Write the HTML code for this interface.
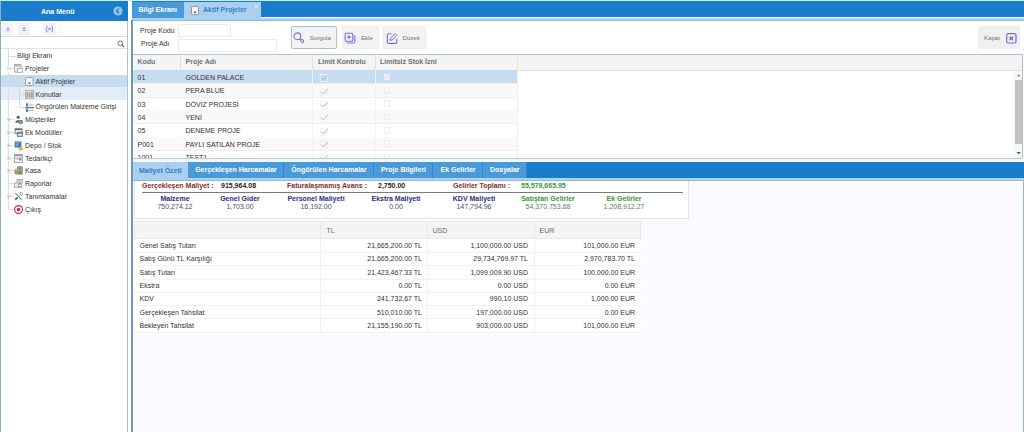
<!DOCTYPE html>
<html><head><meta charset="utf-8">
<style>
*{box-sizing:border-box;margin:0;padding:0}
html,body{width:1024px;height:432px;overflow:hidden;background:#fff;font-family:"Liberation Sans",sans-serif;font-size:7px;color:#333}
.a{position:absolute}
.t{position:absolute;white-space:pre;line-height:8px}
.b{font-weight:bold}
svg{position:absolute;overflow:visible}
</style></head><body>

<div class="a" style="left:0px;top:0px;width:1024px;height:1.2px;background:#c8eef8;"></div>
<div class="a" style="left:0px;top:1px;width:1px;height:431px;background:#8eb0bf;"></div>
<div class="a" style="left:127.1px;top:1px;width:1.2px;height:431px;background:#aac6d0;"></div>
<div class="a" style="left:1px;top:1.2px;width:126.6px;height:19.8px;background:#1a7ccb;"></div>
<div class="t b" style="left:41px;top:7.5px;color:#fff;font-size:7px;">Ana Menü</div>
<svg style="left:113px;top:6px" width="10" height="10"><circle cx="5" cy="5" r="4.6" fill="#8ec4ef"/><path d="M5.8 2.8 L3.6 5 L5.8 7.2" stroke="#1a7ccb" stroke-width="1.3" fill="none"/></svg>
<div class="a" style="left:1px;top:21px;width:126px;height:15px;background:#fff;"></div>
<div class="a" style="left:2px;top:23px;width:11px;height:12px;background:#f3f3f3;"></div>
<div class="a" style="left:18px;top:23px;width:12px;height:12px;background:#f3f3f3;"></div>
<div class="a" style="left:43px;top:23px;width:13px;height:12px;background:#f3f3f3;"></div>
<div class="a" style="left:60px;top:23px;width:1px;height:12px;background:#f4f4f4;"></div>
<svg style="left:5px;top:26px" width="6" height="6"><path d="M1.6 2.3h2.8M1.6 4.3h2.8" stroke="#7b6fd8" stroke-width="0.9"/></svg>
<svg style="left:21px;top:26px" width="6" height="6"><path d="M1.8 2.4h2.8M1.8 4.5h2.8" stroke="#7b6fd8" stroke-width="0.9"/><circle cx="3.2" cy="0.9" r="0.5" fill="#9a90e0"/></svg>
<svg style="left:45px;top:25px" width="9" height="8"><path d="M2 0.8Q0.6 4 2 7.2M7 0.8Q8.4 4 7 7.2" stroke="#7b6fd8" stroke-width="0.8" fill="none"/><path d="M3.3 2.8L5.7 5.2M5.7 2.8L3.3 5.2" stroke="#7b6fd8" stroke-width="0.9"/></svg>
<div class="a" style="left:1px;top:36px;width:126px;height:0.9px;background:#d8d8d8;"></div>
<svg style="left:117px;top:40px" width="8" height="8"><circle cx="3.2" cy="3.2" r="2.3" stroke="#666" stroke-width="0.9" fill="none"/><path d="M4.9 4.9 L7 7" stroke="#666" stroke-width="1.1"/></svg>
<div class="a" style="left:1px;top:48px;width:126px;height:1px;background:#e2e2e2;"></div>
<div class="a" style="left:1px;top:74.8px;width:126.1px;height:12.6px;background:#c5dcf1;"></div>
<div class="a" style="left:1px;top:87.4px;width:126.1px;height:12.2px;background:#e3edf7;"></div>
<div class="a" style="left:8px;top:49px;width:1px;height:160.5px;background:#dedede;"></div>
<div class="a" style="left:19px;top:74.64px;width:1px;height:32.04px;background:#dadada;"></div>
<div class="a" style="left:9px;top:55.5px;width:7px;height:1px;background:#dedede;"></div>
<div class="t" style="left:17px;top:52.3px;color:#333;font-size:7px;">Bilgi Ekranı</div>
<div class="a" style="left:9px;top:68.3px;width:5px;height:1px;background:#dedede;"></div>
<div class="a" style="left:5.5px;top:65.8px;width:6px;height:6px;background:#f6f6f6;"></div>
<div class="a" style="left:6.5px;top:68.3px;width:4px;height:1px;background:#c8c8c8;"></div>
<div class="t" style="left:25px;top:65.1px;color:#333;font-size:7px;">Projeler</div>
<svg style="left:14px;top:64.3px" width="9" height="9"><rect x="0.5" y="0.5" width="6.5" height="7.5" fill="#f0f0f0" stroke="#a8a8a8" stroke-width="0.9"/><rect x="0.5" y="0.5" width="6.5" height="1.8" fill="#b8b8b8"/><rect x="3.5" y="4.5" width="5" height="4" fill="#f6f6f6" stroke="#a8a8a8" stroke-width="0.8"/></svg>
<div class="a" style="left:20px;top:81.0px;width:5px;height:1px;background:#dadada;"></div>
<div class="t" style="left:35.5px;top:77.8px;color:#333;font-size:7px;">Aktif Projeler</div>
<svg style="left:25px;top:77.0px" width="9" height="9"><rect x="0.5" y="0.5" width="7.5" height="8" rx="0.8" fill="#f4f4f4" stroke="#9a9a9a" stroke-width="0.9"/><rect x="3.3" y="5.4" width="2" height="1.6" fill="#707a68"/></svg>
<div class="a" style="left:20px;top:93.8px;width:5px;height:1px;background:#dadada;"></div>
<div class="t" style="left:35.5px;top:90.6px;color:#333;font-size:7px;">Konutlar</div>
<svg style="left:25px;top:89.8px" width="9" height="9"><rect x="0.5" y="0.5" width="8" height="8" fill="#eee" stroke="#a0a0a0" stroke-width="0.7"/><rect x="1.2" y="1.5" width="1.8" height="6.3" fill="#e0a090"/><rect x="3.6" y="1.5" width="1.8" height="6.3" fill="#90c890"/><rect x="6" y="1.5" width="1.8" height="6.3" fill="#90b0c8"/><path d="M0.5 4h8M0.5 6h8" stroke="#888" stroke-width="0.5"/></svg>
<div class="a" style="left:20px;top:106.6px;width:5px;height:1px;background:#dadada;"></div>
<div class="t" style="left:35.5px;top:103.4px;color:#333;font-size:7px;">Öngörülen Malzeme Girişi</div>
<svg style="left:25px;top:102.6px" width="9" height="9"><rect x="1" y="0.3" width="2.2" height="3.2" fill="#4a80b8"/><path d="M4 2h4.5M4 7.3h4.5" stroke="#a0a0a0" stroke-width="0.9"/><path d="M0 4.7h9" stroke="#506070" stroke-width="1.1"/><rect x="1" y="5.8" width="2.2" height="3.2" fill="#4a80b8"/></svg>
<div class="a" style="left:9px;top:119.3px;width:5px;height:1px;background:#dedede;"></div>
<div class="a" style="left:5.5px;top:116.8px;width:6px;height:6px;background:#f6f6f6;"></div>
<div class="a" style="left:6.5px;top:119.3px;width:4px;height:1px;background:#c8c8c8;"></div>
<div class="a" style="left:8px;top:117.8px;width:1px;height:4px;background:#c8c8c8;"></div>
<div class="t" style="left:25px;top:116.1px;color:#333;font-size:7px;">Müşteriler</div>
<svg style="left:14px;top:115.3px" width="9" height="9"><circle cx="4.2" cy="2.2" r="1.5" fill="#555"/><path d="M1.3 7.5C1.3 4.6 6.5 4.6 6.5 7.5Z" fill="#555"/><circle cx="6.8" cy="7" r="2.2" fill="#3a86b6"/><path d="M6.8 6.2v2.2" stroke="#fff" stroke-width="0.7"/></svg>
<div class="a" style="left:9px;top:132.1px;width:5px;height:1px;background:#dedede;"></div>
<div class="a" style="left:5.5px;top:129.6px;width:6px;height:6px;background:#f6f6f6;"></div>
<div class="a" style="left:6.5px;top:132.1px;width:4px;height:1px;background:#c8c8c8;"></div>
<div class="a" style="left:8px;top:130.6px;width:1px;height:4px;background:#c8c8c8;"></div>
<div class="t" style="left:25px;top:128.9px;color:#333;font-size:7px;">Ek Modüller</div>
<svg style="left:14px;top:128.1px" width="9" height="9"><rect x="1" y="0.8" width="7" height="4.6" fill="#e8eaec" stroke="#666" stroke-width="0.8"/><rect x="1" y="0.8" width="7" height="1.2" fill="#666"/><rect x="3.2" y="4.2" width="5.5" height="4.3" fill="#5a90c8" stroke="#4a6a8a" stroke-width="0.6"/><rect x="4" y="6" width="4" height="1.6" fill="#e8f0f8"/></svg>
<div class="a" style="left:9px;top:144.9px;width:5px;height:1px;background:#dedede;"></div>
<div class="a" style="left:5.5px;top:142.4px;width:6px;height:6px;background:#f6f6f6;"></div>
<div class="a" style="left:6.5px;top:144.9px;width:4px;height:1px;background:#c8c8c8;"></div>
<div class="a" style="left:8px;top:143.4px;width:1px;height:4px;background:#c8c8c8;"></div>
<div class="t" style="left:25px;top:141.7px;color:#333;font-size:7px;">Depo / Stok</div>
<svg style="left:14px;top:140.9px" width="9" height="9"><rect x="0.6" y="0.4" width="6.8" height="6.2" fill="#3d74c0"/><path d="M1.6 1.8h4.6M1.6 3.3h3.2M1.6 4.8h2.2" stroke="#c8dcf4" stroke-width="0.6"/><path d="M4.6 9L6.8 4.8L9 9Z" fill="#e8c040" stroke="#b8902a" stroke-width="0.4"/></svg>
<div class="a" style="left:9px;top:157.7px;width:5px;height:1px;background:#dedede;"></div>
<div class="a" style="left:5.5px;top:155.2px;width:6px;height:6px;background:#f6f6f6;"></div>
<div class="a" style="left:6.5px;top:157.7px;width:4px;height:1px;background:#c8c8c8;"></div>
<div class="a" style="left:8px;top:156.2px;width:1px;height:4px;background:#c8c8c8;"></div>
<div class="t" style="left:25px;top:154.5px;color:#333;font-size:7px;">Tedarikçi</div>
<svg style="left:14px;top:153.7px" width="9" height="9"><rect x="0.5" y="0.5" width="8" height="8" fill="#f4f2ee" stroke="#8a8a8a" stroke-width="0.7"/><rect x="0.5" y="0.5" width="8" height="1.8" fill="#9aa4ae"/><rect x="1.5" y="3.5" width="2.5" height="2" fill="#e8b090"/><path d="M6 3.2v3.6M4.3 5h3.5" stroke="#3c7ac0" stroke-width="0.9"/></svg>
<div class="a" style="left:9px;top:170.4px;width:5px;height:1px;background:#dedede;"></div>
<div class="a" style="left:5.5px;top:167.9px;width:6px;height:6px;background:#f6f6f6;"></div>
<div class="a" style="left:6.5px;top:170.4px;width:4px;height:1px;background:#c8c8c8;"></div>
<div class="a" style="left:8px;top:168.9px;width:1px;height:4px;background:#c8c8c8;"></div>
<div class="t" style="left:25px;top:167.2px;color:#333;font-size:7px;">Kasa</div>
<svg style="left:14px;top:166.4px" width="9" height="9"><rect x="3.5" y="0.5" width="5" height="6" rx="0.8" fill="#9a9a90" stroke="#70706a" stroke-width="0.5"/><ellipse cx="3.3" cy="4.5" rx="2.8" ry="1.6" fill="#c8b870" stroke="#807040" stroke-width="0.5"/><ellipse cx="3.3" cy="6.7" rx="2.8" ry="1.6" fill="#b8a860" stroke="#807040" stroke-width="0.5"/><ellipse cx="6.5" cy="7.2" rx="2" ry="1.2" fill="#8a9a70" stroke="#60704a" stroke-width="0.5"/></svg>
<div class="a" style="left:9px;top:183.2px;width:5px;height:1px;background:#dedede;"></div>
<div class="t" style="left:25px;top:180.0px;color:#333;font-size:7px;">Raporlar</div>
<svg style="left:14px;top:179.2px" width="9" height="9"><rect x="3" y="0.5" width="5.5" height="4" fill="#e8e8e8" stroke="#8a8a8a" stroke-width="0.6"/><path d="M4 1.8h3.5M4 3.2h3.5" stroke="#999" stroke-width="0.5"/><rect x="0.5" y="4" width="5.5" height="4.5" fill="#eee" stroke="#888" stroke-width="0.6"/><circle cx="5.8" cy="6.3" r="1.6" stroke="#666" stroke-width="0.7" fill="#f6f6f6"/><path d="M7 7.5L8.6 9" stroke="#666" stroke-width="0.8"/></svg>
<div class="a" style="left:9px;top:196.0px;width:5px;height:1px;background:#dedede;"></div>
<div class="a" style="left:5.5px;top:193.5px;width:6px;height:6px;background:#f6f6f6;"></div>
<div class="a" style="left:6.5px;top:196.0px;width:4px;height:1px;background:#c8c8c8;"></div>
<div class="a" style="left:8px;top:194.5px;width:1px;height:4px;background:#c8c8c8;"></div>
<div class="t" style="left:25px;top:192.8px;color:#333;font-size:7px;">Tanımlamalar</div>
<svg style="left:14px;top:192.0px" width="9" height="9"><path d="M1.2 1.2L7.8 7.8" stroke="#8a8a8a" stroke-width="1.2"/><path d="M6.8 2.2L3.2 5.8" stroke="#9ab0c8" stroke-width="1"/><path d="M3.6 5.4L1.2 7.8" stroke="#3a78b8" stroke-width="2"/><circle cx="7.3" cy="1.7" r="1.3" fill="none" stroke="#7a8a9a" stroke-width="0.8"/></svg>
<div class="a" style="left:9px;top:208.7px;width:5px;height:1px;background:#dedede;"></div>
<div class="t" style="left:25px;top:205.5px;color:#333;font-size:7px;">Çıkış</div>
<svg style="left:14px;top:204.7px" width="9" height="9"><circle cx="4.5" cy="4.5" r="3.9" fill="#fff" stroke="#d0203a" stroke-width="1.1"/><circle cx="4.5" cy="4.5" r="1.7" fill="#d0203a"/></svg>
<div class="a" style="left:132px;top:1.2px;width:892px;height:16.3px;background:#1a7ccb;"></div>
<div class="a" style="left:132px;top:17.5px;width:892px;height:2.3px;background:#acd5f3;"></div>
<div class="a" style="left:132px;top:19.8px;width:892px;height:1px;background:#93b8d0;"></div>
<div class="a" style="left:132px;top:1.5px;width:52px;height:16px;background:#4a9ad9;"></div>
<div class="t b" style="left:138.5px;top:6px;color:#fff;font-size:7px;">Bilgi Ekranı</div>
<div class="a" style="left:184px;top:1.6px;width:77px;height:18.2px;background:#abd0ef;"></div>
<div class="t b" style="left:203px;top:6px;color:#2f7fce;font-size:7px;">Aktif Projeler</div>
<svg style="left:191px;top:6px" width="8" height="9"><rect x="0.5" y="0.5" width="7" height="8" rx="0.8" fill="#f2f2f2" stroke="#909090" stroke-width="0.9"/><rect x="3" y="5.5" width="2" height="1.6" fill="#666"/></svg>
<svg style="left:254px;top:4px" width="5" height="5"><path d="M0.8 0.8L4.2 4.2M4.2 0.8L0.8 4.2" stroke="#fff" stroke-width="0.8"/></svg>
<div class="t" style="left:140px;top:27.2px;color:#333;font-size:7px;">Proje Kodu</div>
<div class="t" style="left:141px;top:40.4px;color:#333;font-size:7px;">Proje Adı</div>
<div class="a" style="left:178px;top:24.3px;width:52.6px;height:12.3px;background:#fff;border:1px solid #eaeaea;border-radius:1px"></div>
<div class="a" style="left:178px;top:39px;width:98.6px;height:12.6px;background:#fff;border:1px solid #eaeaea;border-radius:1px"></div>
<div class="a" style="left:290.6px;top:26.3px;width:46px;height:22.4px;background:#f3f3f3;border:1px solid #a9c2d2;border-radius:2px"></div>
<div class="a" style="left:342px;top:26px;width:37px;height:23px;background:#f3f3f3;border:1px solid #ececec;border-radius:1px"></div>
<div class="a" style="left:383px;top:26px;width:43px;height:23px;background:#f3f3f3;border:1px solid #ececec;border-radius:1px"></div>
<div class="t" style="left:309.8px;top:34.3px;color:#707070;font-size:6.1px;">Sorgula</div>
<div class="t" style="left:361px;top:34.3px;color:#707070;font-size:6.1px;">Ekle</div>
<div class="t" style="left:402.5px;top:34.3px;color:#707070;font-size:6.1px;">Düzelt</div>
<svg style="left:293px;top:32px" width="12" height="12"><circle cx="4.4" cy="4.3" r="3.4" stroke="#7d6ad6" stroke-width="1.1" fill="none"/><path d="M6.8 6.8L8.2 8.2" stroke="#7d6ad6" stroke-width="1.2"/><ellipse cx="9.2" cy="9.1" rx="1.6" ry="1.3" transform="rotate(45 9.2 9.1)" stroke="#7d6ad6" stroke-width="1" fill="none"/></svg>
<svg style="left:344px;top:31.5px" width="12" height="12"><rect x="1.2" y="1.2" width="7.6" height="8" rx="1.2" stroke="#7d6ad6" stroke-width="1.1" fill="none"/><path d="M5 3.3v3.6M3.2 5.1h3.6" stroke="#7d6ad6" stroke-width="1.1"/><path d="M3 11h6.2q1.6 0 1.6-1.6V3.2" stroke="#7d6ad6" stroke-width="1.1" fill="none"/></svg>
<svg style="left:385.5px;top:31.5px" width="12" height="12"><path d="M5.5 1.8H2.6q-1.2 0-1.2 1.2v7.2q0 1.2 1.2 1.2h7q1.2 0 1.2-1.2V7" stroke="#7d6ad6" stroke-width="1.1" fill="none"/><path d="M4 8.3L4.4 6.2L9 1.6L10.8 3.4L6.2 8Z" stroke="#7d6ad6" stroke-width="1" fill="none" stroke-linejoin="round"/></svg>
<div class="a" style="left:978px;top:26px;width:41.5px;height:23px;background:#f0f0f0;border-radius:2px"></div>
<div class="t" style="left:984px;top:34.3px;color:#707070;font-size:6.1px;">Kapat</div>
<svg style="left:1005.5px;top:33px" width="11" height="11"><rect x="0.7" y="0.7" width="9.3" height="9.3" rx="1.5" stroke="#7c6cd6" stroke-width="1.2" fill="none"/><path d="M3.6 3.6L7.1 7.1M7.1 3.6L3.6 7.1" stroke="#5a50b8" stroke-width="1.1"/></svg>
<div class="a" style="left:132px;top:53.5px;width:891px;height:1.6px;background:#a8c8d8;"></div>
<div class="a" style="left:1022.3px;top:53.5px;width:1.2px;height:104px;background:#9cc0d4;"></div>
<div class="a" style="left:1022.5px;top:181px;width:1.5px;height:251px;background:#8fb8d0;"></div>
<div class="a" style="left:132px;top:55px;width:890px;height:15px;background:#f4f4f4;"></div>
<div class="a" style="left:132px;top:69.5px;width:890px;height:1px;background:#e0e0e0;"></div>
<div class="a" style="left:180px;top:55px;width:1px;height:15px;background:#e2e2e2;"></div>
<div class="a" style="left:312px;top:55px;width:1px;height:15px;background:#e2e2e2;"></div>
<div class="a" style="left:375px;top:55px;width:1px;height:15px;background:#e2e2e2;"></div>
<div class="a" style="left:517px;top:55px;width:1px;height:15px;background:#e2e2e2;"></div>
<div class="t b" style="left:137.5px;top:58px;color:#707070;font-size:7px;">Kodu</div>
<div class="t b" style="left:185.5px;top:58px;color:#707070;font-size:7px;">Proje Adı</div>
<div class="t b" style="left:318px;top:58px;color:#707070;font-size:7px;">Limit Kontrolu</div>
<div class="t b" style="left:380px;top:58px;color:#707070;font-size:7px;">Limitsiz Stok İzni</div>
<div class="a" style="left:132px;top:70.3px;width:385px;height:13.6px;background:#c5dcf1;"></div>
<div class="a" style="left:132px;top:83.3px;width:385px;height:1px;background:#eeeeee;"></div>
<div class="a" style="left:312px;top:70.3px;width:1px;height:13.3px;background:#f3f3f3;"></div>
<div class="a" style="left:375px;top:70.3px;width:1px;height:13.3px;background:#f3f3f3;"></div>
<div class="t" style="left:137.5px;top:74.0px;color:#333;font-size:7px;">01</div>
<div class="t" style="left:185.5px;top:74.0px;color:#333;font-size:7px;">GOLDEN PALACE</div>
<svg style="left:320px;top:73.3px" width="9" height="9"><rect x="0.5" y="1.5" width="7" height="7" fill="none" stroke="#f0f0f0" stroke-width="0.8"/><path d="M1.2 4.6L3.4 6.9L7.6 2.2" stroke="#b4b4b4" stroke-width="1" fill="none"/></svg>
<div class="a" style="left:383.5px;top:73.8px;width:6.5px;height:6.5px;background:#dde9f5;border:1px solid #eeeeee"></div>
<div class="a" style="left:132px;top:83.6px;width:385px;height:13.3px;background:#f9f9f9;"></div>
<div class="a" style="left:132px;top:96.6px;width:385px;height:1px;background:#eeeeee;"></div>
<div class="a" style="left:312px;top:83.6px;width:1px;height:13.3px;background:#f3f3f3;"></div>
<div class="a" style="left:375px;top:83.6px;width:1px;height:13.3px;background:#f3f3f3;"></div>
<div class="t" style="left:137.5px;top:87.3px;color:#333;font-size:7px;">02</div>
<div class="t" style="left:185.5px;top:87.3px;color:#333;font-size:7px;">PERA BLUE</div>
<svg style="left:320px;top:86.6px" width="9" height="9"><rect x="0.5" y="1.5" width="7" height="7" fill="none" stroke="#f0f0f0" stroke-width="0.8"/><path d="M1.2 4.6L3.4 6.9L7.6 2.2" stroke="#b4b4b4" stroke-width="1" fill="none"/></svg>
<div class="a" style="left:383.5px;top:87.1px;width:6.5px;height:6.5px;background:transparent;border:1px solid #eeeeee"></div>
<div class="a" style="left:132px;top:109.9px;width:385px;height:1px;background:#eeeeee;"></div>
<div class="a" style="left:312px;top:96.9px;width:1px;height:13.3px;background:#f3f3f3;"></div>
<div class="a" style="left:375px;top:96.9px;width:1px;height:13.3px;background:#f3f3f3;"></div>
<div class="t" style="left:137.5px;top:100.6px;color:#333;font-size:7px;">03</div>
<div class="t" style="left:185.5px;top:100.6px;color:#333;font-size:7px;">DÖVİZ PROJESİ</div>
<svg style="left:320px;top:99.9px" width="9" height="9"><rect x="0.5" y="1.5" width="7" height="7" fill="none" stroke="#f0f0f0" stroke-width="0.8"/><path d="M1.2 4.6L3.4 6.9L7.6 2.2" stroke="#b4b4b4" stroke-width="1" fill="none"/></svg>
<div class="a" style="left:383.5px;top:100.4px;width:6.5px;height:6.5px;background:transparent;border:1px solid #eeeeee"></div>
<div class="a" style="left:132px;top:110.2px;width:385px;height:13.3px;background:#f9f9f9;"></div>
<div class="a" style="left:132px;top:123.2px;width:385px;height:1px;background:#eeeeee;"></div>
<div class="a" style="left:312px;top:110.2px;width:1px;height:13.3px;background:#f3f3f3;"></div>
<div class="a" style="left:375px;top:110.2px;width:1px;height:13.3px;background:#f3f3f3;"></div>
<div class="t" style="left:137.5px;top:113.9px;color:#333;font-size:7px;">04</div>
<div class="t" style="left:185.5px;top:113.9px;color:#333;font-size:7px;">YENİ</div>
<svg style="left:320px;top:113.2px" width="9" height="9"><rect x="0.5" y="1.5" width="7" height="7" fill="none" stroke="#f0f0f0" stroke-width="0.8"/><path d="M1.2 4.6L3.4 6.9L7.6 2.2" stroke="#b4b4b4" stroke-width="1" fill="none"/></svg>
<div class="a" style="left:383.5px;top:113.7px;width:6.5px;height:6.5px;background:transparent;border:1px solid #eeeeee"></div>
<div class="a" style="left:132px;top:136.5px;width:385px;height:1px;background:#eeeeee;"></div>
<div class="a" style="left:312px;top:123.5px;width:1px;height:13.3px;background:#f3f3f3;"></div>
<div class="a" style="left:375px;top:123.5px;width:1px;height:13.3px;background:#f3f3f3;"></div>
<div class="t" style="left:137.5px;top:127.2px;color:#333;font-size:7px;">05</div>
<div class="t" style="left:185.5px;top:127.2px;color:#333;font-size:7px;">DENEME PROJE</div>
<svg style="left:320px;top:126.5px" width="9" height="9"><rect x="0.5" y="1.5" width="7" height="7" fill="none" stroke="#f0f0f0" stroke-width="0.8"/><path d="M1.2 4.6L3.4 6.9L7.6 2.2" stroke="#b4b4b4" stroke-width="1" fill="none"/></svg>
<div class="a" style="left:383.5px;top:127.0px;width:6.5px;height:6.5px;background:transparent;border:1px solid #eeeeee"></div>
<div class="a" style="left:132px;top:136.8px;width:385px;height:13.3px;background:#f9f9f9;"></div>
<div class="a" style="left:132px;top:149.8px;width:385px;height:1px;background:#eeeeee;"></div>
<div class="a" style="left:312px;top:136.8px;width:1px;height:13.3px;background:#f3f3f3;"></div>
<div class="a" style="left:375px;top:136.8px;width:1px;height:13.3px;background:#f3f3f3;"></div>
<div class="t" style="left:137.5px;top:140.5px;color:#333;font-size:7px;">P001</div>
<div class="t" style="left:185.5px;top:140.5px;color:#333;font-size:7px;">PAYLI SATILAN PROJE</div>
<svg style="left:320px;top:139.8px" width="9" height="9"><rect x="0.5" y="1.5" width="7" height="7" fill="none" stroke="#f0f0f0" stroke-width="0.8"/><path d="M1.2 4.6L3.4 6.9L7.6 2.2" stroke="#b4b4b4" stroke-width="1" fill="none"/></svg>
<div class="a" style="left:383.5px;top:140.3px;width:6.5px;height:6.5px;background:transparent;border:1px solid #eeeeee"></div>
<div class="a" style="left:132px;top:163.1px;width:385px;height:1px;background:#eeeeee;"></div>
<div class="a" style="left:312px;top:150.1px;width:1px;height:13.3px;background:#f3f3f3;"></div>
<div class="a" style="left:375px;top:150.1px;width:1px;height:13.3px;background:#f3f3f3;"></div>
<div class="t" style="left:137.5px;top:153.8px;color:#333;font-size:7px;">1001</div>
<div class="t" style="left:185.5px;top:153.8px;color:#333;font-size:7px;">TEST1</div>
<svg style="left:320px;top:153.1px" width="9" height="9"><rect x="0.5" y="1.5" width="7" height="7" fill="none" stroke="#f0f0f0" stroke-width="0.8"/><path d="M1.2 4.6L3.4 6.9L7.6 2.2" stroke="#b4b4b4" stroke-width="1" fill="none"/></svg>
<div class="a" style="left:383.5px;top:153.6px;width:6.5px;height:6.5px;background:transparent;border:1px solid #eeeeee"></div>
<div class="a" style="left:517px;top:70px;width:1px;height:88px;background:#eeeeee;"></div>
<div class="a" style="left:132px;top:157.6px;width:890px;height:1px;background:#b8cad4;"></div>
<div class="a" style="left:1014px;top:70.5px;width:8.3px;height:87px;background:#f6f6f6;"></div>
<div class="a" style="left:1015px;top:80px;width:7px;height:63.5px;background:#c1c1c1;"></div>
<svg style="left:1015px;top:72px" width="7" height="6"><path d="M2 4.2L3.8 2.4L5.6 4.2Z" fill="#6a6a6a"/></svg>
<svg style="left:1015px;top:151px" width="7" height="6"><path d="M1.5 1L3.7 3.3L5.9 1Z" fill="#555"/></svg>
<div class="a" style="left:132px;top:158.6px;width:892px;height:2.9px;background:#eef8fc;"></div>
<div class="a" style="left:132px;top:161.5px;width:892px;height:16px;background:#1a7ccb;"></div>
<div class="a" style="left:132px;top:177.5px;width:892px;height:2.5px;background:#acd5f3;"></div>
<div class="a" style="left:132px;top:161.5px;width:56px;height:18.5px;background:#abd0ef;"></div>
<div class="t b" style="left:139px;top:166.6px;color:#2f7fce;font-size:7px;">Maliyet Özeti</div>
<div class="a" style="left:188px;top:162px;width:96px;height:16px;background:#4a9ad9;"></div>
<div class="a" style="left:283px;top:162px;width:1px;height:16px;background:#2e86d2;"></div>
<div class="t b" style="left:136.0px;width:200px;text-align:center;top:166.4px;color:#fff;font-size:7px;">Gerçekleşen Harcamalar</div>
<div class="a" style="left:284px;top:162px;width:90px;height:16px;background:#4a9ad9;"></div>
<div class="a" style="left:373px;top:162px;width:1px;height:16px;background:#2e86d2;"></div>
<div class="t b" style="left:229.0px;width:200px;text-align:center;top:166.4px;color:#fff;font-size:7px;">Öngörülen Harcamalar</div>
<div class="a" style="left:374px;top:162px;width:59px;height:16px;background:#4a9ad9;"></div>
<div class="a" style="left:432px;top:162px;width:1px;height:16px;background:#2e86d2;"></div>
<div class="t b" style="left:303.5px;width:200px;text-align:center;top:166.4px;color:#fff;font-size:7px;">Proje Bilgileri</div>
<div class="a" style="left:433px;top:162px;width:50px;height:16px;background:#4a9ad9;"></div>
<div class="a" style="left:482px;top:162px;width:1px;height:16px;background:#2e86d2;"></div>
<div class="t b" style="left:358.0px;width:200px;text-align:center;top:166.4px;color:#fff;font-size:7px;">Ek Gelirler</div>
<div class="a" style="left:483px;top:162px;width:43.5px;height:16px;background:#4a9ad9;"></div>
<div class="a" style="left:525.5px;top:162px;width:1px;height:16px;background:#2e86d2;"></div>
<div class="t b" style="left:404.75px;width:200px;text-align:center;top:166.4px;color:#fff;font-size:7px;">Dosyalar</div>
<div class="a" style="left:132px;top:181px;width:890px;height:251px;background:#fbfafe;"></div>
<div class="a" style="left:132px;top:180px;width:892px;height:1px;background:#93b8d0;"></div>
<div class="a" style="left:134px;top:181px;width:555px;height:37.5px;background:#fff;border:1px solid #e3e3e3;border-top:none"></div>
<div class="t b" style="left:142px;top:181.7px;color:#8b2b2b;font-size:7px;">Gerçekleşen Maliyet :</div>
<div class="t b" style="left:221px;top:181.7px;color:#222;font-size:7px;">915,964.08</div>
<div class="t b" style="left:287px;top:181.7px;color:#8b2b2b;font-size:7px;">Faturalaşmamış Avans :</div>
<div class="t b" style="left:378px;top:181.7px;color:#222;font-size:7px;">2,750.00</div>
<div class="t b" style="left:453px;top:181.7px;color:#8b2b2b;font-size:7px;">Gelirler Toplamı :</div>
<div class="t b" style="left:521px;top:181.7px;color:#3a963a;font-size:7px;">55,579,665.95</div>
<div class="a" style="left:142px;top:192.2px;width:541px;height:1px;background:#7a7a7a;"></div>
<div class="t b" style="left:75px;width:200px;text-align:center;top:195px;color:#2c2c8c;font-size:7px;">Malzeme</div>
<div class="t" style="left:75px;width:200px;text-align:center;top:203px;color:#4a4a78;font-size:7px;">750,274.12</div>
<div class="t b" style="left:140px;width:200px;text-align:center;top:195px;color:#2c2c8c;font-size:7px;">Genel Gider</div>
<div class="t" style="left:140px;width:200px;text-align:center;top:203px;color:#4a4a78;font-size:7px;">1,703.00</div>
<div class="t b" style="left:216px;width:200px;text-align:center;top:195px;color:#2c2c8c;font-size:7px;">Personel Maliyeti</div>
<div class="t" style="left:216px;width:200px;text-align:center;top:203px;color:#4a4a78;font-size:7px;">16,192.00</div>
<div class="t b" style="left:296px;width:200px;text-align:center;top:195px;color:#2c2c8c;font-size:7px;">Ekstra Maliyeti</div>
<div class="t" style="left:296px;width:200px;text-align:center;top:203px;color:#4a4a78;font-size:7px;">0.00</div>
<div class="t b" style="left:374px;width:200px;text-align:center;top:195px;color:#2c2c8c;font-size:7px;">KDV Maliyeti</div>
<div class="t" style="left:374px;width:200px;text-align:center;top:203px;color:#4a4a78;font-size:7px;">147,794.96</div>
<div class="t b" style="left:448px;width:200px;text-align:center;top:195px;color:#3a963a;font-size:7px;">Satıştan Gelirler</div>
<div class="t" style="left:448px;width:200px;text-align:center;top:203px;color:#4a8a4a;font-size:7px;">54,370,753.68</div>
<div class="t b" style="left:524px;width:200px;text-align:center;top:195px;color:#3a963a;font-size:7px;">Ek Gelirler</div>
<div class="t" style="left:524px;width:200px;text-align:center;top:203px;color:#4a8a4a;font-size:7px;">1,208,912.27</div>
<div class="a" style="left:134px;top:221px;width:507px;height:18px;background:#f4f4f4;border:1px solid #e8e8e8;border-top-color:#eee"></div>
<div class="a" style="left:134px;top:239px;width:507px;height:95.5px;background:#fff;"></div>
<div class="a" style="left:320px;top:221px;width:1px;height:18px;background:#e8e8e8;"></div>
<div class="a" style="left:427px;top:221px;width:1px;height:18px;background:#e8e8e8;"></div>
<div class="a" style="left:534px;top:221px;width:1px;height:18px;background:#e8e8e8;"></div>
<div class="t" style="left:326.5px;top:227px;color:#6a6a6a;font-size:7px;">TL</div>
<div class="t" style="left:432.5px;top:227px;color:#6a6a6a;font-size:7px;">USD</div>
<div class="t" style="left:539.5px;top:227px;color:#6a6a6a;font-size:7px;">EUR</div>
<div class="a" style="left:134px;top:251.9px;width:507px;height:1px;background:#f2f2f2;"></div>
<div class="t" style="left:139.5px;top:242.0px;color:#333;font-size:7px;">Genel Satış Tutarı</div>
<div class="t" style="right:602px;top:242.0px;color:#333;font-size:7px;">21,665,200.00 TL</div>
<div class="t" style="right:496px;top:242.0px;color:#333;font-size:7px;">1,100,000.00 USD</div>
<div class="t" style="right:389px;top:242.0px;color:#333;font-size:7px;">101,000.00 EUR</div>
<div class="a" style="left:134px;top:265.2px;width:507px;height:1px;background:#f2f2f2;"></div>
<div class="t" style="left:139.5px;top:255.3px;color:#333;font-size:7px;">Satış Günü TL Karşılığı</div>
<div class="t" style="right:602px;top:255.3px;color:#333;font-size:7px;">21,665,200.00 TL</div>
<div class="t" style="right:496px;top:255.3px;color:#333;font-size:7px;">29,734,769.97 TL</div>
<div class="t" style="right:389px;top:255.3px;color:#333;font-size:7px;">2,970,783.70 TL</div>
<div class="a" style="left:134px;top:278.5px;width:507px;height:1px;background:#f2f2f2;"></div>
<div class="t" style="left:139.5px;top:268.6px;color:#333;font-size:7px;">Satış Tutarı</div>
<div class="t" style="right:602px;top:268.6px;color:#333;font-size:7px;">21,423,467.33 TL</div>
<div class="t" style="right:496px;top:268.6px;color:#333;font-size:7px;">1,099,009.90 USD</div>
<div class="t" style="right:389px;top:268.6px;color:#333;font-size:7px;">100,000.00 EUR</div>
<div class="a" style="left:134px;top:291.8px;width:507px;height:1px;background:#f2f2f2;"></div>
<div class="t" style="left:139.5px;top:281.9px;color:#333;font-size:7px;">Ekstra</div>
<div class="t" style="right:602px;top:281.9px;color:#333;font-size:7px;">0.00 TL</div>
<div class="t" style="right:496px;top:281.9px;color:#333;font-size:7px;">0.00 USD</div>
<div class="t" style="right:389px;top:281.9px;color:#333;font-size:7px;">0.00 EUR</div>
<div class="a" style="left:134px;top:305.1px;width:507px;height:1px;background:#f2f2f2;"></div>
<div class="t" style="left:139.5px;top:295.2px;color:#333;font-size:7px;">KDV</div>
<div class="t" style="right:602px;top:295.2px;color:#333;font-size:7px;">241,732.67 TL</div>
<div class="t" style="right:496px;top:295.2px;color:#333;font-size:7px;">990.10 USD</div>
<div class="t" style="right:389px;top:295.2px;color:#333;font-size:7px;">1,000.00 EUR</div>
<div class="a" style="left:134px;top:318.4px;width:507px;height:1px;background:#f2f2f2;"></div>
<div class="t" style="left:139.5px;top:308.5px;color:#333;font-size:7px;">Gerçekleşen Tahsilat</div>
<div class="t" style="right:602px;top:308.5px;color:#333;font-size:7px;">510,010.00 TL</div>
<div class="t" style="right:496px;top:308.5px;color:#333;font-size:7px;">197,000.00 USD</div>
<div class="t" style="right:389px;top:308.5px;color:#333;font-size:7px;">0.00 EUR</div>
<div class="a" style="left:134px;top:331.7px;width:507px;height:1px;background:#f2f2f2;"></div>
<div class="t" style="left:139.5px;top:321.8px;color:#333;font-size:7px;">Bekleyen Tahsilat</div>
<div class="t" style="right:602px;top:321.8px;color:#333;font-size:7px;">21,155,190.00 TL</div>
<div class="t" style="right:496px;top:321.8px;color:#333;font-size:7px;">903,000.00 USD</div>
<div class="t" style="right:389px;top:321.8px;color:#333;font-size:7px;">101,000.00 EUR</div>
<div class="a" style="left:320px;top:239px;width:1px;height:92.5px;background:#f0f0f0;"></div>
<div class="a" style="left:427px;top:239px;width:1px;height:92.5px;background:#f0f0f0;"></div>
<div class="a" style="left:534px;top:239px;width:1px;height:92.5px;background:#f0f0f0;"></div>
<div class="a" style="left:131.4px;top:19.8px;width:1.3px;height:412.2px;background:#6e98b8;"></div>
</body></html>
